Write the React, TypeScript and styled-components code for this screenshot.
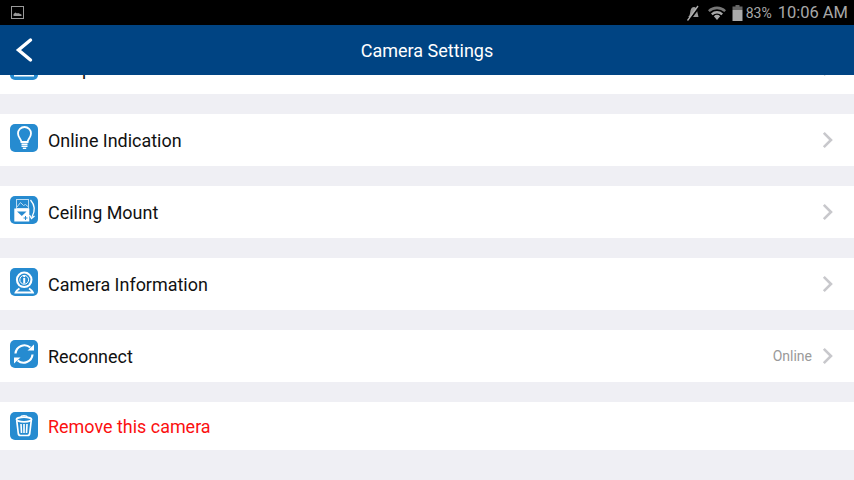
import React from 'react';
import styled, { createGlobalStyle } from 'styled-components';

const GlobalStyle = createGlobalStyle`
  html, body {
    margin: 0;
    padding: 0;
    background: #efeff4;
  }
  body {
    font-family: Roboto, "Liberation Sans", sans-serif;
  }
`;

const TILE = '#268bd0';

const Screen = styled.div`
  width: 854px;
  height: 480px;
  overflow: hidden;
  display: flex;
  flex-direction: column;
  background: #efeff4;
`;

const StatusBar = styled.div`
  height: 25px;
  flex: none;
  background: #000;
  display: flex;
  align-items: center;
  padding: 0 6px 0 11px;
  color: #a8a8a8;
`;

const StatusRight = styled.div`
  margin-left: auto;
  display: flex;
  align-items: center;
`;

const Glyph = styled.svg<{ $gap?: number }>`
  display: block;
  flex: none;
  margin-left: ${p => p.$gap ?? 0}px;
`;

const BatteryText = styled.span`
  font-size: 14px;
  margin-left: 3px;
  margin-right: 6px;
`;

const Clock = styled.span`
  font-size: 16.5px;
`;

const Header = styled.div`
  height: 50px;
  flex: none;
  position: relative;
  z-index: 1;
  background: #004483;
  display: flex;
  align-items: center;
  justify-content: center;
  color: #fff;
  font-size: 18px;
`;

const BackButton = styled.div`
  position: absolute;
  left: 15px;
  top: 12px;
  display: flex;
`;

const Scroller = styled.div`
  flex: 1;
  overflow: hidden;
  display: flex;
  flex-direction: column;
  gap: 20px;
  margin-top: -33px;
`;

const Row = styled.div<{ $short?: boolean }>`
  flex: none;
  height: ${p => (p.$short ? 48 : 52)}px;
  background: #fff;
  display: flex;
  align-items: center;
  padding: 0 21px 0 10px;
`;

const IconTile = styled.div<{ $flush?: boolean }>`
  width: 28px;
  height: 28px;
  border-radius: 5px;
  background: ${TILE};
  flex: none;
  margin-bottom: ${p => (p.$flush ? 0 : 4)}px;
  svg {
    display: block;
  }
`;

const Label = styled.span<{ $danger?: boolean }>`
  margin-left: 10px;
  font-size: 17.95px;
  color: ${p => (p.$danger ? '#fb1010' : '#111')};
`;

const Status = styled.span`
  margin-left: auto;
  margin-right: 10px;
  font-size: 14px;
  color: #9a9a9a;
`;

const Chevron = styled.svg<{ $pushed?: boolean }>`
  width: 11px;
  height: 18px;
  margin-left: ${p => (p.$pushed ? 0 : 'auto')};
  flex: none;
`;

const RowChevron = ({ pushed }: { pushed?: boolean }) => (
  <Chevron $pushed={pushed} viewBox="0 0 11 18" fill="none">
    <path d="M1.8 1.8 9 9l-7.2 7.2" stroke="#c8c8cc" strokeWidth="2.6" />
  </Chevron>
);

const SleepIcon = () => (
  <svg width="28" height="28" viewBox="0 0 28 28" fill="none">
    <path d="M5 20v3.500h18V20" stroke="#fff" strokeWidth="2" />
  </svg>
);

const BulbIcon = () => (
  <svg width="28" height="28" viewBox="0 0 28 28" fill="none" stroke="#fff">
    <path
      d="M11.400 18c0-3-3.400-4.500-3.400-8.500a6.500 6.500 0 0 1 13 0c0 4-3.400 5.500-3.400 8.500z"
      strokeWidth="1.800"
    />
    <path d="M11.500 20.200h6M11.500 22.300h6" strokeWidth="1.400" />
    <path d="M12.800 24.300h3.400" strokeWidth="1.400" />
  </svg>
);

const MountIcon = () => (
  <svg width="28" height="28" viewBox="0 0 28 28" fill="none">
    <rect x="6.500" y="3.500" width="12" height="9" stroke="#bcdcf2" />
    <path d="M7 11l3.500-4.500 3 3 2-1 3 2.500" stroke="#bcdcf2" />
    <rect x="4.300" y="12.500" width="15" height="13" fill="#fff" />
    <path d="M7 15.500h9.500l-4.700 4.500z" fill={TILE} />
    <path d="M13.500 22h4M15.500 20v4" stroke={TILE} />
    <path d="M20.500 4c4 4.500 4.800 11 1.500 17" stroke="#fff" strokeWidth="1.300" />
    <path d="M19.500 19l2 3.500 3-2.500" stroke="#fff" strokeWidth="1.300" />
  </svg>
);

const InfoCamIcon = () => (
  <svg width="28" height="28" viewBox="0 0 28 28" fill="none">
    <circle cx="14.200" cy="11.800" r="8.300" fill="#fff" />
    <circle cx="14.200" cy="11.800" r="6.200" fill={TILE} />
    <circle cx="14.200" cy="11.800" r="4.400" stroke="#fff" />
    <path d="M14.200 10v5.500" stroke="#fff" strokeWidth="2" />
    <circle cx="14.200" cy="8.200" r="1.100" fill="#fff" />
    <path d="M9.500 20.500c-1.500 1-3.500 2.300-4 4h17.500c-.5-1.700-2.500-3-4-4" stroke="#fff" strokeWidth="1.800" />
  </svg>
);

const ReconnectIcon = () => (
  <svg width="28" height="28" viewBox="0 0 28 28" fill="none">
    <path d="M5.500 13.500a9 9 0 0 1 14.800-6" stroke="#fff" strokeWidth="2.200" />
    <path d="M22.500 14.500a9 9 0 0 1-14.800 6" stroke="#fff" strokeWidth="2.200" />
    <path d="M17.500 10.500h6.500V4.500z" fill="#fff" />
    <path d="M10.500 17.500H4v6z" fill="#fff" />
  </svg>
);

const TrashIcon = () => (
  <svg width="28" height="28" viewBox="0 0 28 28" fill="none" stroke="#fff">
    <ellipse cx="14" cy="7.500" rx="7.600" ry="2.300" strokeWidth="1.700" />
    <path d="M10.800 5.500c0-2.400 6.400-2.400 6.400 0" strokeWidth="1.300" />
    <path
      d="M6.800 9l1.500 12.500c.2 1.300 1 2 2.200 2h7c1.200 0 2-.7 2.200-2L21.200 9"
      strokeWidth="1.700"
    />
    <path d="M11 12l.5 9M14 12v9M17 12l-.5 9" strokeWidth="1.600" />
  </svg>
);

const PictureGlyph = () => (
  <Glyph width="13" height="13" viewBox="0 0 13 13" fill="none">
    <rect x="0.500" y="0.500" width="12" height="12" stroke="#9a9a9a" />
    <path d="M2.500 10V8l2-1.500 1.500 1 1-.5 3.500 1.500V10z" fill="#9a9a9a" />
  </Glyph>
);

const MuteGlyph = () => (
  <Glyph width="14" height="16" viewBox="0 0 14 16" fill="none">
    <path d="M2 12c2-1 2-4 2.500-6.500S6.500 2 8 2s2.700 1.300 3 3.500l1.500 6.500z" fill="#9a9a9a" />
    <path d="M2.800 16 13.800 1" stroke="#000" strokeWidth="2" />
    <path d="M1.500 15.500 12 1" stroke="#b0b0b0" strokeWidth="1.300" />
  </Glyph>
);

const WifiGlyph = () => (
  <Glyph $gap={8} width="18" height="14" viewBox="0 0 18 14" fill="none">
    <path d="M0 4.200a13 13 0 0 1 18 0l-1.700 1.900a10.500 10.500 0 0 0-14.600 0z" fill="#777" />
    <path d="M3 7.400a8.700 8.700 0 0 1 12 0l-1.600 1.800a6.300 6.300 0 0 0-8.800 0z" fill="#a8a8a8" />
    <path d="M5.800 10.300a4.700 4.700 0 0 1 6.400 0L9 14z" fill="#a8a8a8" />
  </Glyph>
);

const BatteryGlyph = () => (
  <Glyph $gap={6} width="11" height="16" viewBox="0 0 11 16">
    <path d="M3.500 0h4v1.500h3V5H.5V1.500h3z" fill="#666" />
    <path d="M.5 5h10v11H.5z" fill="#ababab" />
  </Glyph>
);

export default function App() {
  return (
    <Screen>
      <GlobalStyle />
      <StatusBar>
        <PictureGlyph />
        <StatusRight>
          <MuteGlyph />
          <WifiGlyph />
          <BatteryGlyph />
          <BatteryText>83%</BatteryText>
          <Clock>10:06 AM</Clock>
        </StatusRight>
      </StatusBar>
      <Header>
        <BackButton>
          <svg width="20" height="26" viewBox="0 0 20 26" fill="none">
            <path d="M15.500 3 3.500 13l12 10" stroke="#fff" strokeWidth="3.400" strokeLinecap="round" />
          </svg>
        </BackButton>
        Camera Settings
      </Header>
      <Scroller>
        <Row>
          <IconTile><SleepIcon /></IconTile>
          <Label>Sleep Mode</Label>
          <RowChevron />
        </Row>
        <Row>
          <IconTile><BulbIcon /></IconTile>
          <Label>Online Indication</Label>
          <RowChevron />
        </Row>
        <Row>
          <IconTile><MountIcon /></IconTile>
          <Label>Ceiling Mount</Label>
          <RowChevron />
        </Row>
        <Row>
          <IconTile><InfoCamIcon /></IconTile>
          <Label>Camera Information</Label>
          <RowChevron />
        </Row>
        <Row>
          <IconTile><ReconnectIcon /></IconTile>
          <Label>Reconnect</Label>
          <Status>Online</Status>
          <RowChevron pushed />
        </Row>
        <Row $short>
          <IconTile $flush><TrashIcon /></IconTile>
          <Label $danger>Remove this camera</Label>
        </Row>
      </Scroller>
    </Screen>
  );
}
